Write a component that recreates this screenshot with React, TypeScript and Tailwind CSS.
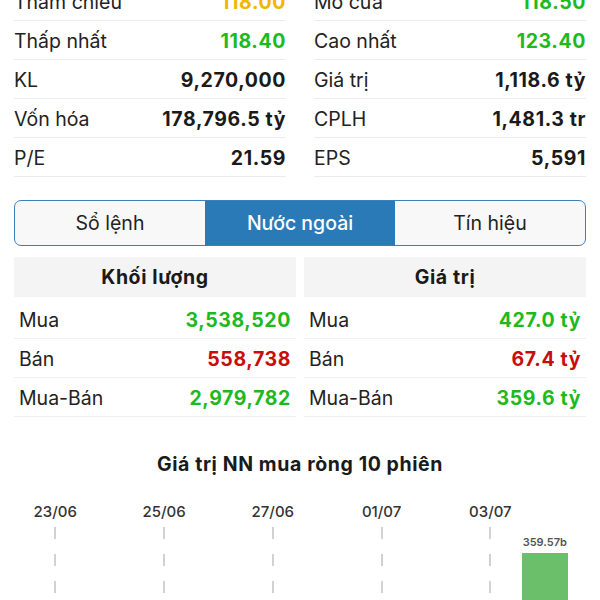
import React from "react";

const green = "text-[#1eb91e]";
const red = "text-[#c80d0d]";
const yellow = "text-[#f2b600]";

type Row = { l: string; v: string; c?: string };

const left: Row[] = [
  { l: "Tham chiếu", v: "118.00", c: yellow },
  { l: "Thấp nhất", v: "118.40", c: green },
  { l: "KL", v: "9,270,000" },
  { l: "Vốn hóa", v: "178,796.5 tỷ" },
  { l: "P/E", v: "21.59" },
];
const right: Row[] = [
  { l: "Mở cửa", v: "118.50", c: green },
  { l: "Cao nhất", v: "123.40", c: green },
  { l: "Giá trị", v: "1,118.6 tỷ" },
  { l: "CPLH", v: "1,481.3 tr" },
  { l: "EPS", v: "5,591" },
];

function StatCol({ rows }: { rows: Row[] }) {
  return (
    <div className="flex flex-col">
      {rows.map((r) => (
        <div key={r.l} className="h-[39px] pt-[4px] border-b border-[#ececec] flex items-center justify-between">
          <span className="text-[19.5px] text-[#222]">{r.l}</span>
          <span className={`text-[19.5px] font-bold tracking-[0.6px] ${r.c ?? "text-[#1a1a1a]"}`}>{r.v}</span>
        </div>
      ))}
    </div>
  );
}

function NNCol({ title, rows }: { title: string; rows: Row[] }) {
  return (
    <div className="flex flex-col">
      <div className="h-[40px] pt-[1px] bg-[#f4f4f4] flex items-center justify-center text-[19.5px] font-bold tracking-[0.6px] text-[#1a1a1a]">
        {title}
      </div>
      <div className="mt-[3px] flex flex-col">
        {rows.map((r) => (
          <div key={r.l} className="h-[39px] pt-[4px] border-b border-[#f0f0f0] flex items-center justify-between px-[5px]">
            <span className="text-[19.5px] text-[#222]">{r.l}</span>
            <span className={`text-[19.5px] font-bold tracking-[0.6px] ${r.c}`}>{r.v}</span>
          </div>
        ))}
      </div>
    </div>
  );
}

const dates = ["23/06", "", "25/06", "", "27/06", "", "01/07", "", "03/07", ""];

function Dashed() {
  return (
    <svg width="4" height="80" className="block">
      <line x1="2" y1="0" x2="2" y2="80" stroke="#c4c4c4" strokeWidth="1.5" strokeDasharray="12 15" />
    </svg>
  );
}

export default function App() {
  return (
    <div
      className="w-[600px] h-[600px] overflow-hidden bg-white px-[14px]"
      style={{ fontFamily: "Inter, 'Noto Sans', sans-serif" }}
    >
      <div className="-mt-[18px] grid grid-cols-2 gap-[28px]">
        <StatCol rows={left} />
        <StatCol rows={right} />
      </div>

      <div className="mt-[23px] h-[46px] pt-[2px] grid grid-cols-3 rounded-[7px] border-[1.5px] border-[#3a80ba] overflow-hidden bg-[#f8f8f8]">
        <div className="-mt-[2px] flex items-center justify-center text-[19.5px] text-[#222]">
          <span className="mt-[2px]">Sổ lệnh</span>
        </div>
        <div className="-mt-[2px] flex items-center justify-center text-[19.5px] font-medium text-white bg-[#2b7ab8]">
          <span className="mt-[2px]">Nước ngoài</span>
        </div>
        <div className="-mt-[2px] flex items-center justify-center text-[19.5px] text-[#222]">
          <span className="mt-[2px]">Tín hiệu</span>
        </div>
      </div>

      <div className="mt-[11px] grid grid-cols-2 gap-[8px]">
        <NNCol
          title="Khối lượng"
          rows={[
            { l: "Mua", v: "3,538,520", c: green },
            { l: "Bán", v: "558,738", c: red },
            { l: "Mua-Bán", v: "2,979,782", c: green },
          ]}
        />
        <NNCol
          title="Giá trị"
          rows={[
            { l: "Mua", v: "427.0 tỷ", c: green },
            { l: "Bán", v: "67.4 tỷ", c: red },
            { l: "Mua-Bán", v: "359.6 tỷ", c: green },
          ]}
        />
      </div>

      <div className="mt-[36px] h-[24px] flex items-center justify-center text-[19.5px] font-bold tracking-[0.6px] text-[#1a1a1a]">
        Giá trị NN mua ròng 10 phiên
      </div>

      <div className="mt-[25px] mx-[14px] grid grid-cols-10">
        {dates.map((d, i) => (
          <div key={i} className="flex flex-col items-center">
            <div className="h-[20px] flex items-center text-[15px] font-medium text-[#333]">{d}</div>
            {d ? (
              <div className="mt-[5px]">
                <Dashed />
              </div>
            ) : i === 9 ? (
              <div className="mt-[13px] flex flex-col items-center w-full">
                <div className="h-[14px] flex items-center text-[11px] font-semibold text-[#555]">359.57b</div>
                <div className="mt-[4px] w-[46px] h-[60px] bg-[#6bbf6a]" />
              </div>
            ) : null}
          </div>
        ))}
      </div>
    </div>
  );
}
